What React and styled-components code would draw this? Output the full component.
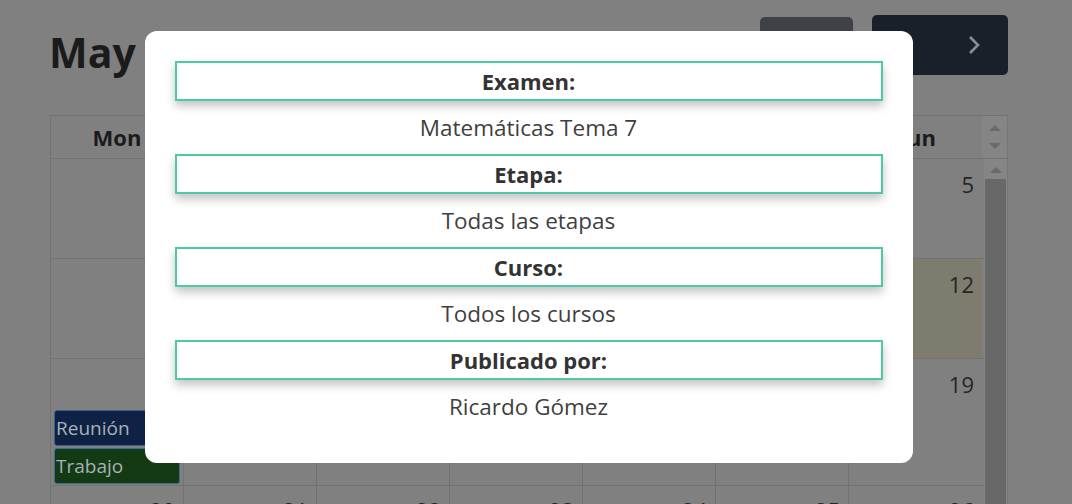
import React from 'react'
import styled, { createGlobalStyle } from 'styled-components'

const GlobalStyle = createGlobalStyle`
    html, body {
        margin: 0;
        padding: 0;
        background: #808080;
        overflow: hidden;
    }
    body {
        font-family: 'Open Sans', 'Noto Sans', sans-serif;
    }
`

const weeks = [
    ['', '', '', '', '', '', '5'],
    ['', '', '', '', '', '', '12'],
    ['', '', '', '', '', '', '19'],
    ['20', '21', '22', '23', '24', '25', '26']
]

const days = ['Mon', 'Tue', 'Wed', 'Thu', 'Fri', 'Sat', 'Sun']

const details = [
    { label: 'Examen:', value: 'Matemáticas Tema 7' },
    { label: 'Etapa:', value: 'Todas las etapas' },
    { label: 'Curso:', value: 'Todos los cursos' },
    { label: 'Publicado por:', value: 'Ricardo Gómez' }
]

function App() {
    return (
        <>
            <GlobalStyle />
            <Page>
                <Toolbar>
                    <Title>May 2024</Title>
                    <Actions>
                        <TodayButton>today</TodayButton>
                        <NavGroup>
                            <NavButton>‹</NavButton>
                            <NavButton>
                                <svg width="14" height="20" viewBox="0 0 14 20">
                                    <path
                                        d="M3 2 L11 10 L3 18"
                                        fill="none"
                                        stroke="#8a8d91"
                                        strokeWidth="2.6"
                                    />
                                </svg>
                            </NavButton>
                        </NavGroup>
                    </Actions>
                </Toolbar>

                <Calendar>
                    <HeaderRow>
                        {days.map((d) => (
                            <HeaderCell key={d}>{d}</HeaderCell>
                        ))}
                        <Gutter>
                            <Arrow up />
                            <Arrow />
                        </Gutter>
                    </HeaderRow>
                    <BodyArea>
                        <Weeks>
                            {weeks.map((week, i) => (
                                <Week key={i} tall={i === 2}>
                                    {week.map((n, j) => (
                                        <DayCell
                                            key={j}
                                            today={i === 1 && j === 6}
                                        >
                                            <DayNumber compact={i === 3}>
                                                {n}
                                            </DayNumber>
                                            {i === 2 && j === 0 && (
                                                <Events>
                                                    <Event kind="meeting">
                                                        Reunión
                                                    </Event>
                                                    <Event kind="work">
                                                        Trabajo
                                                    </Event>
                                                </Events>
                                            )}
                                        </DayCell>
                                    ))}
                                </Week>
                            ))}
                        </Weeks>
                        <Scrollbar>
                            <Arrow up />
                            <Thumb />
                        </Scrollbar>
                    </BodyArea>
                </Calendar>
            </Page>

            <Backdrop>
                <Modal>
                    {details.map((item) => (
                        <React.Fragment key={item.label}>
                            <Label>{item.label}</Label>
                            <Value>{item.value}</Value>
                        </React.Fragment>
                    ))}
                </Modal>
            </Backdrop>
        </>
    )
}

export default App

// Css styling
const Page = styled.div`
    width: 958px;
    padding: 15px 0 0 50px;
    color: #1b1b1b;
`

const Toolbar = styled.div`
    display: flex;
    justify-content: space-between;
    align-items: flex-start;
    height: 100px;
`

const Title = styled.h2`
    margin: 13px 0 0 -1px;
    font-size: 41px;
    font-weight: 700;
    line-height: 1.2;
    white-space: nowrap;
`

const Actions = styled.div`
    display: flex;
    gap: 19px;
`

const TodayButton = styled.div`
    width: 93px;
    height: 58px;
    margin-top: 2px;
    background: #3e4247;
    border-radius: 5px;
    color: #8a8d91;
    font-size: 20px;
    display: flex;
    align-items: center;
    justify-content: center;
`

const NavGroup = styled.div`
    display: flex;
    width: 136px;
    height: 60px;
    background: #1a2029;
    border-radius: 5px;
`

const NavButton = styled.div`
    flex: 1;
    display: flex;
    align-items: center;
    justify-content: center;
    color: #8a8d91;
    font-size: 32px;
`

const Calendar = styled.div`
    border: 1px solid #727272;
    border-right-color: #767676;
    border-bottom: none;
`

const HeaderRow = styled.div`
    display: grid;
    grid-template-columns: repeat(7, 133px) 1fr;
    height: 42px;
    border-bottom: 1px solid #727272;
`

const HeaderCell = styled.div`
    display: flex;
    align-items: center;
    justify-content: center;
    font-size: 22px;
    font-weight: 700;
    border-right: 1px solid #727272;
    &:nth-child(7) {
        border-right: none;
    }
`

const Gutter = styled.div`
    display: flex;
    flex-direction: column;
    align-items: center;
    gap: 12px;
    padding-top: 9px;
    background: #858585;
`

const Arrow = styled.div`
    width: 0;
    height: 0;
    border-left: 6px solid transparent;
    border-right: 6px solid transparent;
    ${(props) =>
        props.up
            ? 'border-bottom: 6px solid #6a6a6a;'
            : 'border-top: 6px solid #6a6a6a;'}
`

const BodyArea = styled.div`
    display: flex;
`

const Weeks = styled.div`
    display: flex;
    flex-direction: column;
    width: 934px;
`

const Week = styled.div`
    display: grid;
    grid-template-columns: repeat(7, 133px);
    height: ${(props) => (props.tall ? '126px' : '99px')};
    border-bottom: 1px solid #727272;
`

const DayCell = styled.div`
    display: flex;
    flex-direction: column;
    border-right: 1px solid #727272;
    background: ${(props) => (props.today ? '#7e7b6f' : 'transparent')};
    &:last-child {
        border-right: none;
    }
`

const DayNumber = styled.div`
    text-align: right;
    padding: ${(props) => (props.compact ? '9px 8px 0 0' : '10px 8px 0 0')};
    font-size: 22px;
    line-height: 30px;
    min-height: 30px;
    color: #252525;
`

const Events = styled.div`
    display: flex;
    flex-direction: column;
    gap: 2px;
    margin: auto 3px 1px 3px;
`

const Event = styled.div`
    height: 34px;
    border-radius: 3px;
    border: 1px solid
        ${(props) => (props.kind === 'meeting' ? '#3a5f8c' : '#3a6a90')};
    background: ${(props) =>
        props.kind === 'meeting' ? '#0f2245' : '#143a14'};
    color: #a8b0b8;
    font-size: 19px;
    line-height: 34px;
    padding-left: 1px;
    white-space: nowrap;
`

const Scrollbar = styled.div`
    width: 23px;
    display: flex;
    flex-direction: column;
    align-items: center;
    padding-top: 8px;
    background: #858585;
`

const Thumb = styled.div`
    margin-top: 6px;
    width: 21px;
    height: 400px;
    background: #686868;
`

const Backdrop = styled.div`
    position: fixed;
    inset: 0;
    display: flex;
    justify-content: center;
    align-items: flex-start;
    padding: 31px 15px 0 0;
`

const Modal = styled.div`
    width: 708px;
    padding: 30px;
    background: #fff;
    border-radius: 12px;
    display: flex;
    flex-direction: column;
    color: #3a3a3a;
`

const Label = styled.div`
    height: 36px;
    border: 2px solid #4ec9a8;
    box-shadow: 0 5px 9px rgba(0, 0, 0, 0.24);
    text-align: center;
    font-size: 22px;
    font-weight: 700;
    line-height: 36px;
    color: #333;
`

const Value = styled.div`
    padding: 10px 0;
    line-height: 33px;
    text-align: center;
    font-size: 22.5px;
    color: #3f3f3f;
`
